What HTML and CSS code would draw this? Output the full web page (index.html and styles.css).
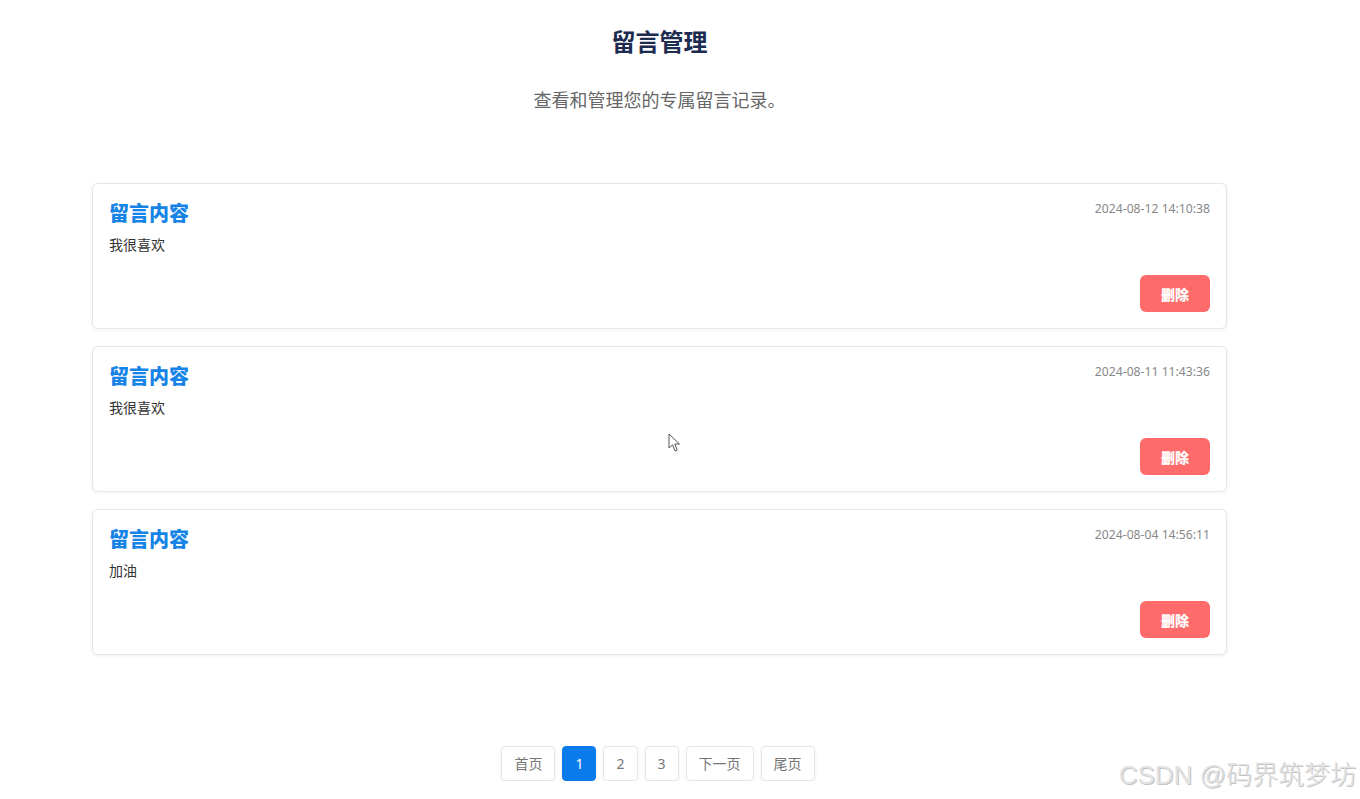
FILE: index.html
```html
<!DOCTYPE html>
<html lang="zh-CN">
  <head>
    <meta charset="UTF-8" />
    <meta name="viewport" content="width=device-width, initial-scale=1.0" />
    <title>留言管理</title>
    <link rel="stylesheet" href="styles.css">
  </head>
  <body>
    <div class="container">
      <h1>留言管理</h1>
      <p class="subtitle">查看和管理您的专属留言记录。</p>

      <div class="messages">
        <div class="message">
          <div class="message-head">
            <h3>留言内容</h3>
            <span class="date">2024-08-12 14:10:38</span>
          </div>
          <p class="text">我很喜欢</p>
          <div class="actions">
            <button class="delete">删除</button>
          </div>
        </div>
        <div class="message">
          <div class="message-head">
            <h3>留言内容</h3>
            <span class="date">2024-08-11 11:43:36</span>
          </div>
          <p class="text">我很喜欢</p>
          <div class="actions">
            <button class="delete">删除</button>
          </div>
        </div>
        <div class="message">
          <div class="message-head">
            <h3>留言内容</h3>
            <span class="date">2024-08-04 14:56:11</span>
          </div>
          <p class="text">加油</p>
          <div class="actions">
            <button class="delete">删除</button>
          </div>
        </div>
      </div>

      <div class="pagination">
        <a href="#">首页</a>
        <a href="#" class="active">1</a>
        <a href="#">2</a>
        <a href="#">3</a>
        <a href="#">下一页</a>
        <a href="#">尾页</a>
      </div>
    </div>

    <!-- mouse pointer captured in the screenshot -->
    <svg class="cursor" width="14" height="20" viewBox="0 0 14 20">
      <path d="M1 1 L1 15 L4.5 11.8 L7 18 L9.2 17 L6.8 11 L11.5 11 Z" fill="#fff" stroke="#555" stroke-width="1" stroke-linejoin="round" />
    </svg>

    <div class="watermark">CSDN @码界筑梦坊</div>
  </body>
</html>
```

FILE: styles.css
```css
body {
  font-family: "Noto Sans", "Noto Sans CJK SC", sans-serif;
  background-color: #fff;
  margin: 0;
  padding: 0;
  color: #333;
}
.container {
  width: 1135px;
  margin-left: 92px;
  padding-top: 24px;
}
h1 {
  margin: 0;
  text-align: center;
  font-size: 24px;
  line-height: 36px;
  color: #1c2b4f;
}
.subtitle {
  margin: 27px 0 0;
  text-align: center;
  font-size: 18px;
  line-height: 26px;
  color: #666;
}
.messages {
  margin-top: 70px;
  display: flex;
  flex-direction: column;
  gap: 17px;
}
.message {
  background: #fff;
  border: 1px solid #e6e6e6;
  border-radius: 6px;
  padding: 16px;
  box-shadow: 0 1px 4px rgba(0, 0, 0, 0.06);
}
.message-head {
  display: flex;
  justify-content: space-between;
  align-items: flex-start;
}
.message-head h3 {
  margin: 0;
  font-size: 20px;
  line-height: 28px;
  font-weight: 800;
  color: #1584e6;
}
.date {
  font-size: 12.2px;
  line-height: 18px;
  color: #888;
}
.text {
  margin: 6px 0 0;
  font-size: 14px;
  line-height: 22px;
  color: #333;
}
.actions {
  display: flex;
  justify-content: flex-end;
  margin-top: 19px;
}
.delete {
  width: 70px;
  height: 37px;
  border: none;
  border-radius: 6px;
  background-color: #ff6b6b;
  color: #fff;
  font-family: inherit;
  font-size: 14px;
  font-weight: 800;
  cursor: pointer;
}
.pagination {
  margin-top: 91px;
  display: flex;
  justify-content: center;
  gap: 7px;
  padding-right: 3px;
}
.pagination a {
  display: block;
  min-width: 33px;
  height: 35px;
  box-sizing: border-box;
  padding: 0 12px;
  border: 1px solid #e6e6e6;
  border-radius: 4px;
  box-shadow: 0 1px 4px rgba(0, 0, 0, 0.06);
  font-size: 14px;
  line-height: 33px;
  text-align: center;
  color: #777;
  text-decoration: none;
}
.pagination a.active {
  background-color: #0a7bea;
  border-color: #0a7bea;
  color: #fff;
}
.cursor {
  position: absolute;
  left: 668px;
  top: 433px;
}
.watermark {
  position: absolute;
  right: 4px;
  top: 759px;
  font-family: "Liberation Sans", "Noto Sans CJK SC", sans-serif;
  font-size: 26px;
  line-height: 32px;
  font-weight: 300;
  color: #e2e2e2;
  text-shadow: 1px 1px 0 #c4c4c4;
}
```
